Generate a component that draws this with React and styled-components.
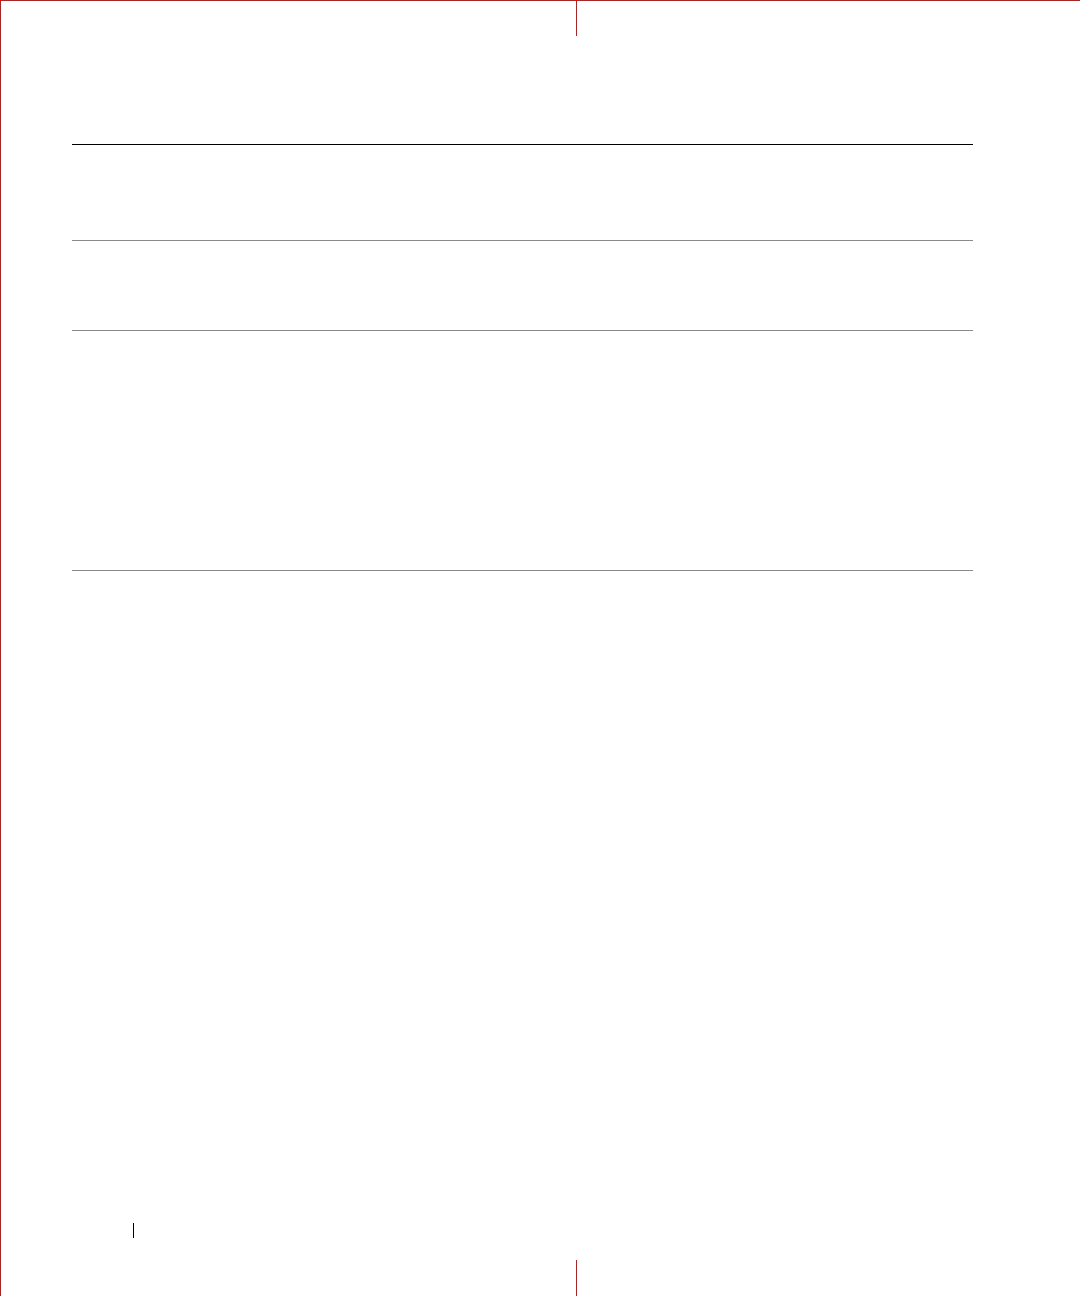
import React from "react";
import styled, { createGlobalStyle } from "styled-components";

const Global = createGlobalStyle`
  html, body {
    margin: 0;
    padding: 0;
    background: #ffffff;
    font-family: "Liberation Serif", serif;
  }
`;

const Page = styled.div`
  width: 1080px;
  height: 1296px;
  box-sizing: border-box;
  border-top: 1px solid #ff0000;
  border-left: 1px solid #ff0000;
  display: flex;
  flex-direction: column;
  overflow: hidden;
`;

const CropMark = styled.div`
  width: 1px;
  height: ${(props) => props.$height || 36}px;
  margin-left: 575px;
  background: #ff0000;
  margin-top: ${(props) => props.$top || 0}px;
  flex-shrink: 0;
`;

const Table = styled.div`
  margin-top: 108px;
  margin-left: 71px;
  width: 901px;
  border-top: 1px solid #000000;
  display: flex;
  flex-direction: column;
`;

const Row = styled.div`
  height: ${(props) => props.$height}px;
  border-bottom: 1px solid #8a8a8a;
`;

const Folio = styled.div`
  margin-top: 652px;
  margin-left: 132px;
  width: 1px;
  height: 15px;
  background: #000000;
  flex-shrink: 0;
`;

const rows = [95, 89, 239];

export default () => {
  return (
    <>
      <Global />
      <Page>
        <CropMark $height={35} />
        <Table>
          {rows.map((h, i) => (
            <Row key={i} $height={h} />
          ))}
        </Table>
        <Folio />
        <CropMark $top={22} />
      </Page>
    </>
  );
};
